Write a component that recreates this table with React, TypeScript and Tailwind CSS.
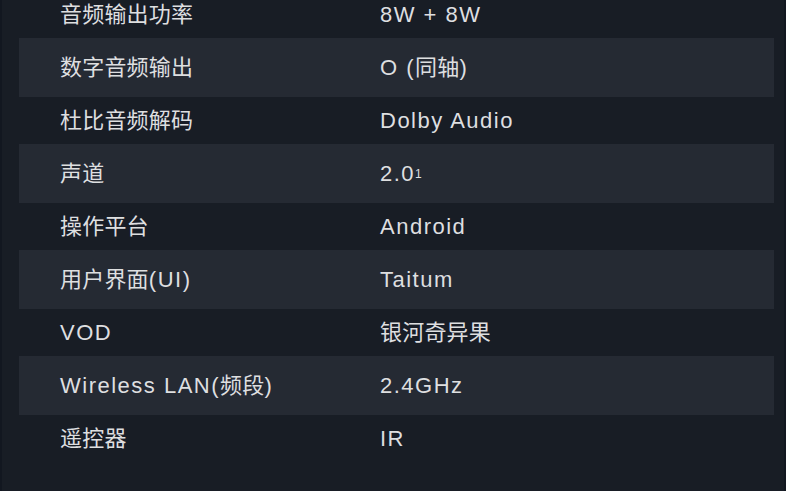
import React from "react";

function T({ text }: { text: string }) {
  const parts = text.split(/([\u4e00-\u9fff]+)/).filter((p) => p.length > 0);
  return (
    <>
      {parts.map((p, i) =>
        /[\u4e00-\u9fff]/.test(p) ? (
          <span key={i} className="tracking-[0.2px]">
            {p}
          </span>
        ) : (
          <span key={i}>{p}</span>
        )
      )}
    </>
  );
}

const rows: [string, React.ReactNode][] = [
  ["音频输出功率", <T text="8W + 8W" />],
  ["数字音频输出", <T text="O (同轴)" />],
  ["杜比音频解码", <T text="Dolby Audio" />],
  ["声道", <>2.0<sup className="text-[12px] relative -top-[3px]">1</sup></>],
  ["操作平台", <T text="Android" />],
  ["用户界面(UI)", <T text="Taitum" />],
  ["VOD", <T text="银河奇异果" />],
  ["Wireless LAN(频段)", <T text="2.4GHz" />],
  ["遥控器", <T text="IR" />],
];

export default function App() {
  return (
    <div
      className="h-[491px] w-full bg-[#121720] px-[2px] overflow-hidden"
      style={{ fontFamily: '"Liberation Sans", "Noto Sans CJK SC", sans-serif' }}
    >
      <div className="h-full bg-[#181d25] pl-[17px] pr-[10px] text-[22px] tracking-[1.5px] text-[#dedfe0]">
        {rows.map(([label, value], i) => {
          const striped = i % 2 === 1;
          const cls =
            i === 0
              ? "h-[38px] pb-[8px]"
              : striped
              ? "h-[59px] bg-[#252a33]"
              : "h-[47px]";
          return (
            <div key={i} className={`flex items-center pl-[41px] ${cls}`}>
              <div className="w-[320px] shrink-0 leading-none">
                <T text={label} />
              </div>
              <div className="leading-none">{value}</div>
            </div>
          );
        })}
      </div>
    </div>
  );
}
